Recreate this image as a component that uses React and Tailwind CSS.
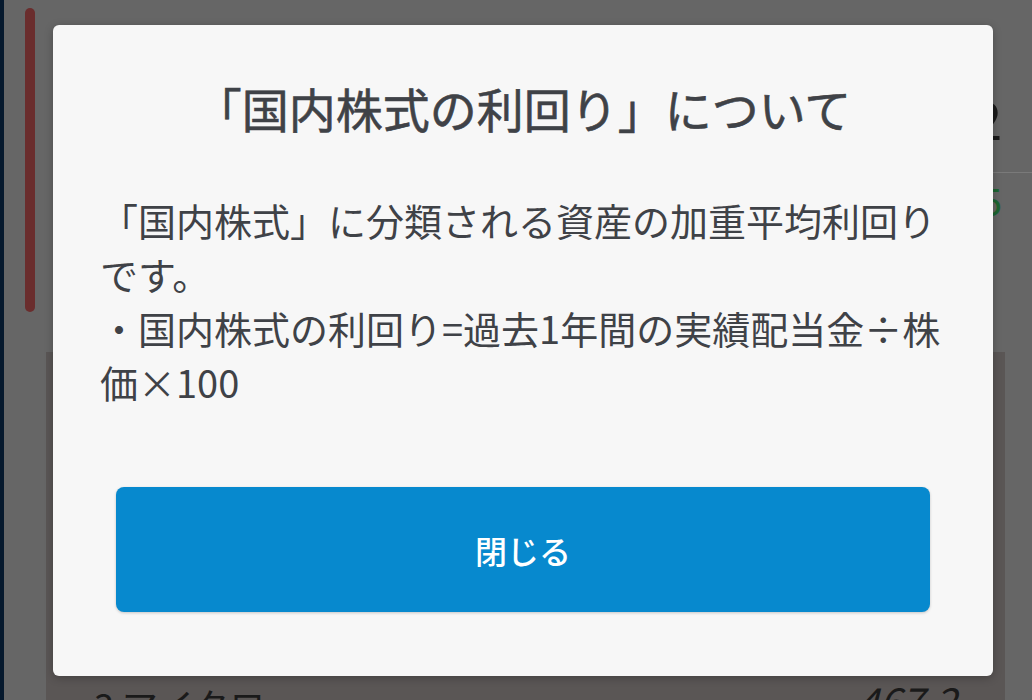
export default function App() {
  const font = { fontFamily: '"Noto Sans CJK JP", "Noto Sans", sans-serif' };
  return (
    <div className="relative w-[1032px] h-[700px] overflow-hidden bg-[#666666] flex" style={font}>
      {/* underlying page (dimmed) */}
      <div className="w-[4px] h-full bg-[#06192d]" />
      <div className="flex-1 flex flex-col">
        <div className="h-[352px] flex">
          <div className="ml-[21px] mt-[8px] w-[10px] h-[304px] rounded-full bg-[#6a2d2d]" />
          <div className="flex-1 flex flex-col items-end">
            <div className="mt-[78px] pr-[30px] text-[52px] leading-[80px] text-[#1a1a1a]">12</div>
            <div className="mt-[14px] w-[600px] h-px bg-[#7a7a7a]" />
            <div className="mt-[4px] pr-[30px] text-[38px] leading-[46px] text-[#1d6531]">+5</div>
          </div>
        </div>
        <div className="ml-[42px] w-[959px] flex-1 bg-[#5a5655] flex items-end justify-between px-[48px]">
          <div className="text-[36px] leading-[1] text-[#1a1a1a] translate-y-[22px]">3 マイクロ</div>
          <div className="text-[40px] leading-[1] italic text-[#1a1a1a] translate-y-[20px]">467.2</div>
        </div>
      </div>

      {/* modal */}
      <div className="absolute left-[53px] top-[25px] w-[940px] h-[651px] bg-[#f7f7f7] rounded-[6px] shadow-[0_2px_8px_rgba(0,0,0,0.25)] flex flex-col px-[47px]">
        <h2 className="mt-[48px] text-center text-[47px] leading-[69px] font-normal text-[#3f4247] [-webkit-text-stroke:0.6px_#3f4247]">
          「国内株式の利回り」について
        </h2>
        <p className="mt-[51px] text-[38px] leading-[54px] text-[#3f4247]">
          「国内株式」に分類される資産の加重平均利回りです。
          <br />
          ・国内株式の利回り=過去1年間の実績配当金÷株価×100
        </p>
        <button className="mt-[78px] mx-[16px] h-[125px] rounded-[8px] bg-[#0789ce] text-white text-[32px] font-medium shadow-[0_1px_3px_rgba(0,0,0,0.2)]">
          閉じる
        </button>
      </div>
    </div>
  );
}
